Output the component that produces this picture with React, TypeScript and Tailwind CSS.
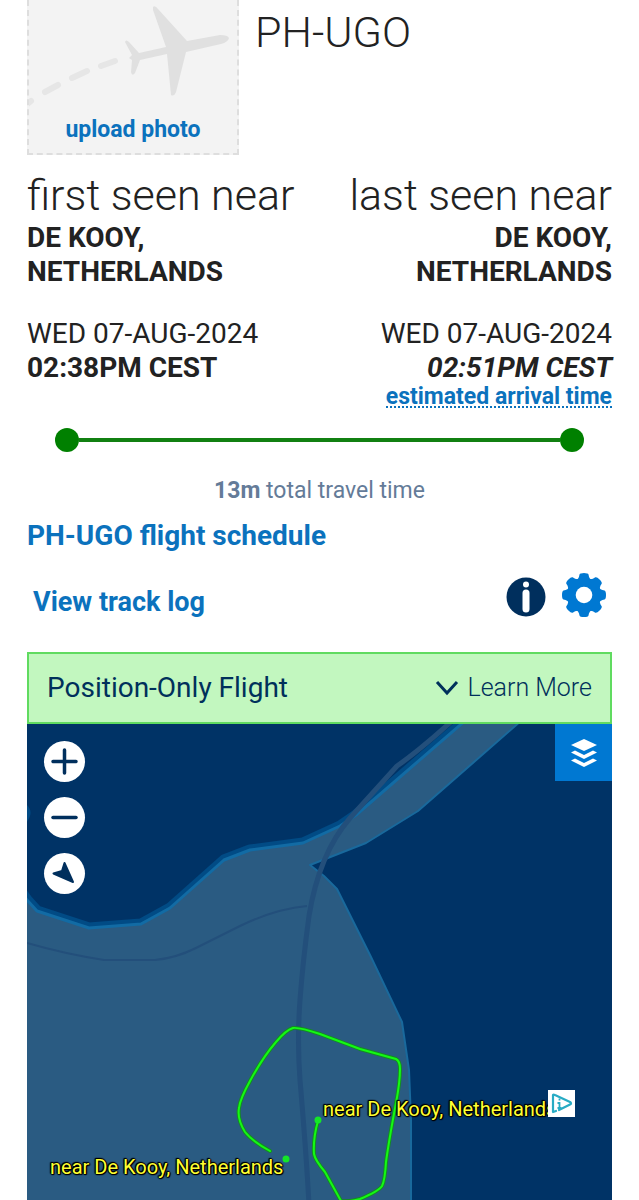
import React from "react";

const COAST =
  "M20 890 L27 900 L37 911 L89 928 L141 924 L170 908 L224 860 L250 850 L303 843 L340 826 L356 815 L466 720";
const EAST_SHORE =
  "M522 720 L418 811 L366 843 L310 865 L324 876 L337 889 L371 957 L402 1022 L409 1070 L411 1120 L411 1210";
const TRACK =
  "M270 1151 Q252 1141 245 1132 Q237 1119 239 1108 Q240 1099 250 1081 Q263 1057 276 1042 Q286 1030 293 1028 Q299 1027 320 1034 L360 1049 L396 1059 Q400 1061 400 1069 Q400 1082 396 1103 Q389 1140 386 1162 Q385 1180 382 1186 Q379 1191 360 1199 Q349 1202 341 1201 L325 1172 Q315 1160 314 1154 Q313 1138 318 1121";

function PlanePlaceholder() {
  return (
    <svg viewBox="29 0 208 153" className="absolute inset-0 h-full w-full" aria-hidden="true">
      <path d="M25 106 L31 101 M45 92 L58 85 M72 78 L87 71 M101 66 L115 61" fill="none" stroke="#e6e6e6" strokeWidth="6" strokeLinecap="round" />
      <path
        fill="#e0e0e0"
        d="M153 7 Q155 5 158 9 L187 41 L220 35 Q228 35 229 38 Q228 42 221 44 L186 52 L176 92 Q174 97 171 95 L167 54 L140 60 L135 73 Q132 77 131 72 L132 60 L129 58 L132 55 L125 42 Q126 39 129 42 L139 53 L166 47 L153 10 Z"
      />
    </svg>
  );
}

function InfoIcon() {
  return (
    <svg viewBox="0 0 40 40" className="size-10" aria-hidden="true">
      <circle cx="20" cy="20" r="19.500" fill="#002f5d" />
      <circle cx="20" cy="7.500" r="3" fill="#fff" />
      <rect x="16.500" y="12.500" width="7" height="23" rx="3.500" fill="#fff" />
    </svg>
  );
}

function GearIcon() {
  return (
    <svg viewBox="0 0 44 44" className="size-11" aria-hidden="true">
      <g fill="#0078d2">
        <circle cx="22" cy="22" r="17" />
        {[0, 45, 90, 135, 180, 225, 270, 315].map((a) => (
          <path key={a} d="M13 8 Q17 6 17.500 1.500 Q18 0 22 0 Q26 0 26.500 1.500 Q27 6 31 8 Z" transform={`rotate(${a} 22 22)`} />
        ))}
      </g>
      <circle cx="22" cy="22" r="8.300" fill="#fff" />
    </svg>
  );
}

function MapDrawing() {
  return (
    <svg viewBox="27 724 585 476" preserveAspectRatio="xMidYMid slice" className="absolute inset-0 h-full w-full" aria-hidden="true">
      <rect x="27" y="724" width="585" height="476" fill="#003366" />
      <g fill="none" strokeLinejoin="round">
        <path d={COAST} stroke="#014b85" strokeWidth="11" />
        <path d="M26 804 Q35 812 26 823 Z" fill="#014b85" />
      </g>
      <path d={`${COAST} L522 720 L418 811 L366 843 L310 865 L324 876 L337 889 L371 957 L402 1022 L409 1070 L411 1120 L411 1210 L20 1210 Z`} fill="#2a5b82" />
      <g fill="none" strokeLinejoin="round">
        <path d={COAST} stroke="#126ba4" strokeWidth="3" />
        <path d={EAST_SHORE} stroke="#19699c" strokeWidth="2" />
        <path d="M27 943 Q65 954 104 960 L155 960 Q176 958 196 948 L240 926 Q275 909 307 906" stroke="#234f7b" strokeWidth="2" />
        <path d="M453 720 Q420 750 397 766 Q386 778 350 818 Q319 854 309 916 Q303 960 300 1000 Q297 1040 300 1080 Q306 1150 309 1204" stroke="#234f7b" strokeWidth="5" />
      </g>
      <g fill="none" strokeLinecap="round" strokeLinejoin="round">
        <path d={TRACK} stroke="#148b25" strokeWidth="4" />
        <path d={TRACK} stroke="#14fa14" strokeWidth="2" />
      </g>
      <circle cx="318" cy="1120" r="3.500" fill="#14e628" />
      <circle cx="286" cy="1159" r="3.500" fill="#14e628" />
    </svg>
  );
}

function MapButton({ label, children }: { label: string; children: React.ReactNode }) {
  return (
    <button type="button" aria-label={label} className="size-[41px] rounded-full bg-white">
      <svg viewBox="0 0 41 41" className="size-full" aria-hidden="true" fill="none" stroke="#002f5d" strokeWidth="3.500" strokeLinecap="round">
        {children}
      </svg>
    </button>
  );
}

const OUTLINE =
  "[text-shadow:1px_0_1px_#000,-1px_0_1px_#000,0_1px_1px_#000,0_-1px_1px_#000,1px_1px_1px_#000,-1px_-1px_1px_#000]";

function MapLabel({ className }: { className: string }) {
  return (
    <span className={`absolute whitespace-nowrap text-[20px] leading-6 text-[#ffff32] ${OUTLINE} ${className}`}>
      near De Kooy, Netherlands
    </span>
  );
}

export default function App() {
  return (
    <main className="bg-white px-[27px] font-['Roboto',sans-serif] text-[#222]">
      <header className="flex gap-4">
        <a href="#upload" className="relative flex h-[155px] w-[212px] shrink-0 items-end justify-center border-2 border-t-0 border-dashed border-[#dedede] bg-[#f3f3f3] pb-[9px] text-[23px] leading-7 font-bold text-[#0b72bd]">
          <PlanePlaceholder />
          <span className="relative">upload photo</span>
        </a>
        <h1 className="pt-2 text-[43px] leading-[48px] font-light">PH-UGO</h1>
      </header>

      <section className="mt-4 flex justify-between text-[28px] leading-[34px]">
        <div>
          <h2 className="pb-[2px] text-[43px] leading-[48px] font-light">first seen near</h2>
          <p className="font-bold">DE KOOY,<br />NETHERLANDS</p>
          <p className="mt-7">WED 07-AUG-2024</p>
          <p className="font-bold">02:38PM CEST</p>
        </div>
        <div className="text-right">
          <h2 className="pb-[2px] text-[43px] leading-[48px] font-light">last seen near</h2>
          <p className="font-bold">DE KOOY,<br />NETHERLANDS</p>
          <p className="mt-7">WED 07-AUG-2024</p>
          <p className="font-bold italic">02:51PM CEST</p>
          <p className="flex justify-end pt-[3px]">
            <a href="#estimate" className="border-b-2 border-dotted border-[#0b72bd] text-[23px] leading-[18px] font-bold text-[#0b72bd]">estimated arrival time</a>
          </p>
        </div>
      </section>

      <div className="mx-7 mt-5 flex items-center">
        <span className="size-6 rounded-full bg-[#008000]" />
        <span className="h-1 flex-1 bg-[#118011]" />
        <span className="size-6 rounded-full bg-[#008000]" />
      </div>
      <p className="mt-[25px] text-center text-[23px] leading-7 text-[#647b98]">
        <strong>13m</strong> total travel time
      </p>

      <p className="mt-[14px] text-[28px] leading-[34px] font-bold">
        <a href="#schedule" className="text-[#0b72bd]">PH-UGO flight schedule</a>
      </p>

      <div className="mt-5 flex items-end justify-between px-[6px]">
        <a href="#tracklog" className="text-[27px] leading-[30px] font-bold text-[#0b72bd]">View track log</a>
        <div className="flex items-end gap-4">
          <button type="button" aria-label="Information"><InfoIcon /></button>
          <button type="button" aria-label="Settings"><GearIcon /></button>
        </div>
      </div>

      <div className="mt-[35px] flex h-[72px] items-center justify-between border-2 border-[#60db60] bg-[#c2f7bf] px-[18px] text-[#00305b]">
        <span className="text-[28px] leading-[34px]">Position-Only Flight</span>
        <button type="button" className="flex items-center gap-2 text-[25px] leading-[34px] font-light">
          <svg viewBox="0 0 24 16" className="h-4 w-6" fill="none" stroke="#00305b" strokeWidth="3" aria-hidden="true">
            <path d="M2 2 L12 13 L22 2" />
          </svg>
          Learn More
        </button>
      </div>

      <section aria-label="Flight map" className="relative aspect-[585/476] overflow-hidden">
        <MapDrawing />
        <div className="absolute top-[17px] left-[17px] flex flex-col gap-[15px]">
          <MapButton label="Zoom in"><path d="M20.500 9 V32 M9 20.500 H32" /></MapButton>
          <MapButton label="Zoom out"><path d="M9 20.500 H32" /></MapButton>
          <MapButton label="Center on flight">
            <path d="M20.500 10 L29 29 L9.500 20.500 L18 18 Z" fill="#002f5d" strokeWidth="2" strokeLinejoin="round" />
          </MapButton>
        </div>
        <button type="button" aria-label="Map layers" className="absolute top-0 right-0 flex size-[57px] items-center justify-center bg-[#0078d2]">
          <svg viewBox="0 0 28 30" className="h-[30px] w-7" fill="#fff" aria-hidden="true">
            <path d="M14 1 L27 7 L14 13 L1 7 Z" />
            <path d="M1 14.500 L5 12.500 L14 17 L23 12.500 L27 14.500 L14 21 Z" />
            <path d="M1 22.500 L5 20.500 L14 25 L23 20.500 L27 22.500 L14 29 Z" />
          </svg>
        </button>
        <MapLabel className="top-[373px] left-[296px]" />
        <MapLabel className="top-[431px] left-[23px]" />
        <a href="#ad-choices" aria-label="Ad choices" className="absolute top-[366px] left-[521px] size-[27px] bg-white">
          <svg viewBox="0 0 27 27" className="size-full" fill="none" stroke="#28abc4" aria-hidden="true">
            <path d="M8 21 L5 22 V5 Q5 4 7 5 L22 12 Q24 13.500 22 14.500 L11 20" strokeWidth="2.200" strokeLinejoin="round" strokeLinecap="round" />
            <path d="M11.500 8.500 V10.500 M9.500 13 H11.500 V18 M9.500 18 H13.500" strokeWidth="1.800" />
          </svg>
        </a>
      </section>
    </main>
  );
}
